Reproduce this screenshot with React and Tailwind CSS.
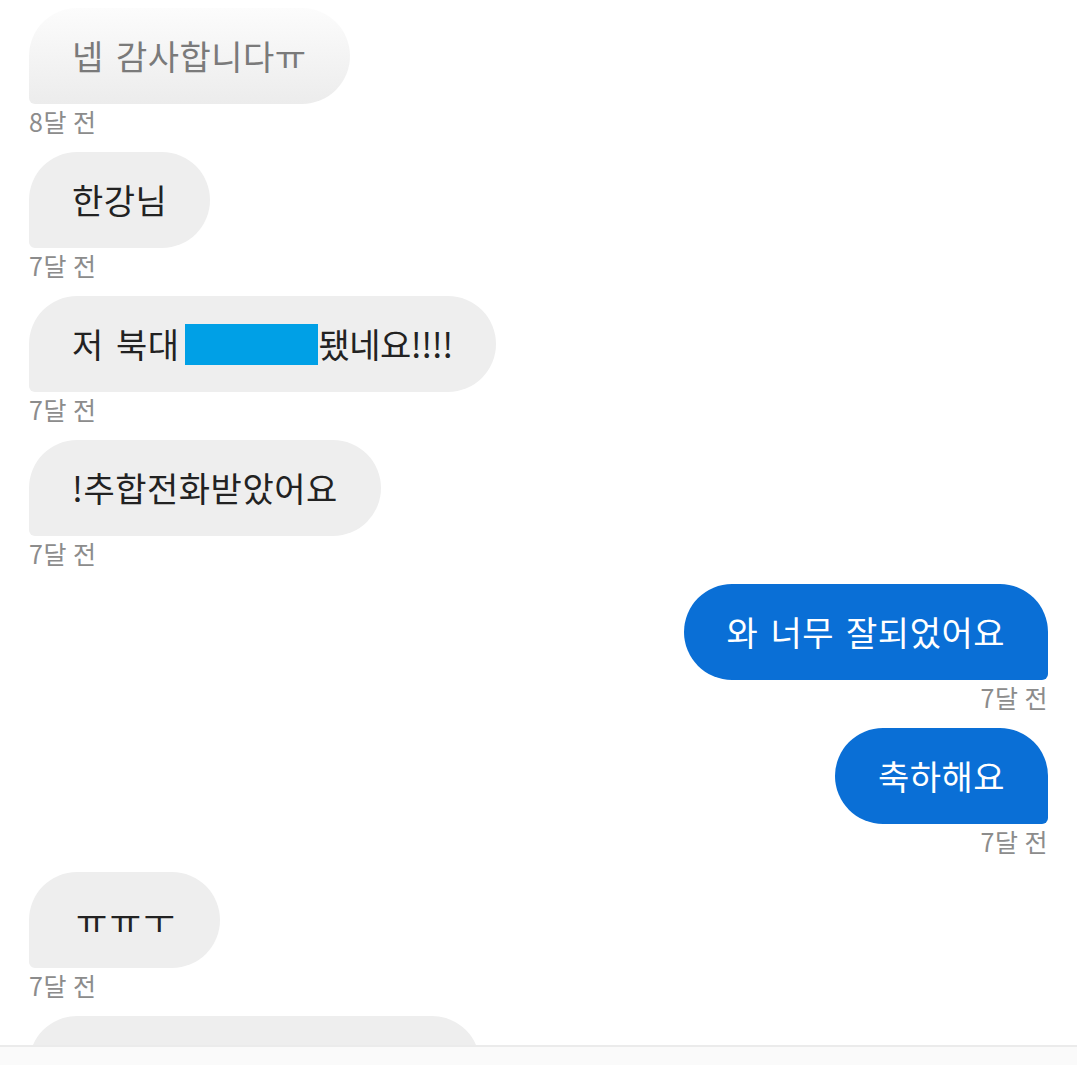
const messages = [
  { me: false, text: '넵 감사합니다ㅠ', time: '8달 전', faded: true },
  { me: false, text: '한강님', time: '7달 전' },
  { me: false, text: 'redacted', time: '7달 전' },
  { me: false, text: '!추합전화받았어요', time: '7달 전' },
  { me: true, text: '와 너무 잘되었어요', time: '7달 전' },
  { me: true, text: '축하해요', time: '7달 전' },
  { me: false, text: 'ㅠㅠㅜ', time: '7달 전', extra: 'tracking-[2.5px] pl-[47px]' },
  { me: false, text: '', time: '', wide: true },
]

function Bubble({ msg }) {
  const base = 'h-[96px] flex items-center px-[43px] text-[34px] tracking-[0.5px] [word-spacing:4px] leading-none whitespace-nowrap'
  if (msg.me) {
    return (
      <div className={`${base} bg-[#0a6fd6] text-white rounded-[48px] rounded-br-[6px]`}>
        {msg.text}
      </div>
    )
  }
  if (msg.faded) {
    return (
      <div className={`${base} bg-gradient-to-b from-[#fcfcfc] to-[#ececec] text-[#7a7a7a] rounded-[48px] rounded-bl-[6px]`}>
        {msg.text}
      </div>
    )
  }
  if (msg.text === 'redacted') {
    return (
      <div className={`${base} [word-spacing:0px] bg-[#eeeeee] text-[#222] rounded-[48px] rounded-bl-[6px]`}>
        저 북대
        <span className="inline-block ml-[6px] w-[133px] h-[41px] bg-[#00a0e6]" />
        <span className="tracking-[-0.5px]">됐네요!!!!</span>
      </div>
    )
  }
  return (
    <div className={`${base} bg-[#eeeeee] text-[#222] rounded-[48px] rounded-bl-[6px] ${msg.wide ? 'w-[451px]' : ''} ${msg.extra || ''}`}>
      {msg.text}
    </div>
  )
}

export default function App() {
  return (
    <div
      className="relative h-[1065px] overflow-hidden bg-white"
      style={{ fontFamily: '"Noto Sans CJK KR", Roboto, "Noto Sans", sans-serif' }}
    >
      <div className="flex flex-col px-[29px] pt-[8px]">
        {messages.map((m, i) => (
          <div key={i} className={`flex flex-col ${m.me ? 'items-end' : 'items-start'}`}>
            <Bubble msg={m} />
            <div className="h-[35px] mb-[13px] flex items-center text-[25px] tracking-[0.5px] text-[#8c8c8c] leading-none">
              {m.time}
            </div>
          </div>
        ))}
      </div>
      <div className="absolute bottom-0 left-0 right-0 h-[20px] bg-[#fafafa] border-t-2 border-[#ebebeb]" />
    </div>
  )
}
